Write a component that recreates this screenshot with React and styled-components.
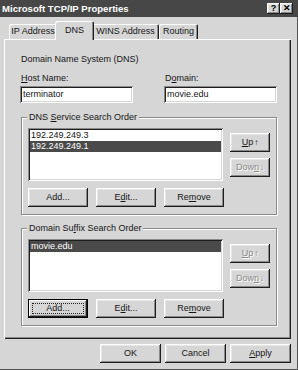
import React from "react"
import styled, { createGlobalStyle, css } from "styled-components"

const GlobalStyle = createGlobalStyle`
  html, body {
    margin: 0;
    padding: 0;
    background: #d6d6d6;
  }
  body {
    font-family: "Liberation Sans", Arial, sans-serif;
    font-size: 9px;
    line-height: 11px;
    color: #151515;
  }
  * {
    box-sizing: border-box;
  }
`

const raised = css`
  background: #d6d6d6;
  box-shadow: inset -1px -1px #1e1e1e, inset 1px 1px #fff,
    inset -2px -2px #8a8a8a, inset 2px 2px #e6e6e6;
`

const sunken = css`
  background: #fff;
  box-shadow: inset 1px 1px #8a8a8a, inset -1px -1px #fff,
    inset 2px 2px #1e1e1e, inset -2px -2px #d6d6d6;
`

const Window = styled.div`
  width: 298px;
  height: 370px;
  background: #d6d6d6;
  display: flex;
  flex-direction: column;
  box-shadow: inset -1px -1px #555;
`

const TitleBar = styled.div`
  height: 17px;
  background: #474747;
  color: #fff;
  display: flex;
  align-items: center;
  padding: 0 5px 0 2px;
  font-weight: bold;
  font-size: 9.6px;
`

const Title = styled.span`
  flex: 1;
`

const TitleButton = styled.div`
  ${raised};
  width: 13px;
  height: 11px;
  display: flex;
  align-items: center;
  justify-content: center;
  font-size: 9px;
  font-weight: bold;
  color: #000;
  margin-left: ${p => (p.$gap ? "0" : "0")};
`

const Body = styled.div`
  display: flex;
  flex-direction: column;
  padding: 4px 7px 0 4px;
`

const TabsRow = styled.div`
  display: flex;
  align-items: flex-end;
  height: 18px;
  padding-left: 5px;
  position: relative;
  z-index: 1;
`

const Tab = styled.div`
  width: ${p => p.$w}px;
  height: 15px;
  border-radius: 2px 2px 0 0;
  background: #d6d6d6;
  box-shadow: inset 1px 1px #fff, inset -1px 0 #1e1e1e, inset -2px 0 #8a8a8a;
  display: flex;
  justify-content: center;
  padding-top: 2px;
  ${p =>
    p.$active &&
    css`
      height: 19px;
      width: ${p.$w + 4}px;
      margin: 0 -2px -1px;
      padding-top: 4px;
      position: relative;
      z-index: 2;
    `}
`

const Panel = styled.div`
  height: 300px;
  display: flex;
  flex-direction: column;
  padding-left: 16px;
  box-shadow: inset 1px 1px #fff, inset -1px -1px #1e1e1e,
    inset -2px -2px #8a8a8a;
`

const Heading = styled.div`
  margin: 15px 0 0 1px;
`

const FieldRow = styled.div`
  display: flex;
  gap: 31px;
  margin-top: 8px;
`

const Field = styled.div`
  width: 113px;
  display: flex;
  flex-direction: column;
`

const FieldLabel = styled.div`
  margin: 0 0 2px 1px;
`

const TextBox = styled.div`
  ${sunken};
  height: 17px;
  padding: 3px 0 0 3px;
`

const Group = styled.div`
  position: relative;
  width: 256px;
  margin: ${p => p.$top}px 0 0 1px;
  padding: 10px 0 7px 6px;
  border: 1px solid #8a8a8a;
  box-shadow: inset 1px 1px #fff, 1px 1px #fff;
`

const Legend = styled.span`
  position: absolute;
  top: -6px;
  left: 5px;
  padding: 0 2px;
  background: #d6d6d6;
`

const ListRow = styled.div`
  display: flex;
  gap: 7px;
`

const ListBox = styled.div`
  ${sunken};
  width: 195px;
  height: 53px;
  padding: 2px 2px;
`

const Item = styled.div`
  height: 11px;
  padding-left: 1px;
  ${p =>
    p.$selected &&
    css`
      background: #4a4a4a;
      color: #fff;
    `}
`

const SideButtons = styled.div`
  display: flex;
  flex-direction: column;
  gap: 6px;
  padding-top: 5px;
`

const ButtonRow = styled.div`
  display: flex;
  gap: 8px;
  margin-top: 7px;
`

const Button = styled.div`
  ${raised};
  position: relative;
  width: ${p => p.$w || 60}px;
  height: 19px;
  display: flex;
  align-items: center;
  justify-content: center;
  padding-bottom: 1px;
  color: ${p => (p.$disabled ? "#8a8a8a" : "#151515")};
  text-shadow: ${p => (p.$disabled ? "1px 1px #fff" : "none")};
  ${p =>
    p.$focused &&
    css`
      box-shadow: inset 0 0 0 1px #000, inset -2px -2px #1e1e1e,
        inset 2px 2px #fff, inset -3px -3px #8a8a8a;
      &::after {
        content: "";
        position: absolute;
        inset: 4px;
        border: 1px dotted #222;
      }
    `}
`

const Arrow = styled.span`
  font-size: 8px;
  margin-left: 1px;
`

const Footer = styled.div`
  display: flex;
  justify-content: flex-end;
  gap: 4px;
  margin-top: 5px;
`

const Key = styled.u`
  text-decoration: underline;
  text-underline-offset: 1px;
`

const SearchGroup = ({ top, title, items, addFocused }) => (
  <Group $top={top}>
    <Legend>{title}</Legend>
    <ListRow>
      <ListBox>
        {items.map(it => (
          <Item key={it.text} $selected={it.selected}>
            {it.text}
          </Item>
        ))}
      </ListBox>
      <SideButtons>
        <Button $w={40} $disabled={addFocused}>
          <Key>U</Key>p<Arrow>↑</Arrow>
        </Button>
        <Button $w={40} $disabled>
          Dow<Key>n</Key>
          <Arrow>↓</Arrow>
        </Button>
      </SideButtons>
    </ListRow>
    <ButtonRow>
      <Button $focused={addFocused}>Add...</Button>
      <Button>
        E<Key>d</Key>it...
      </Button>
      <Button>
        Re<Key>m</Key>ove
      </Button>
    </ButtonRow>
  </Group>
)

export default function App() {
  return (
    <>
      <GlobalStyle />
      <Window>
        <TitleBar>
          <Title>Microsoft TCP/IP Properties</Title>
          <TitleButton>?</TitleButton>
          <TitleButton>✕</TitleButton>
        </TitleBar>
        <Body>
          <TabsRow>
            <Tab $w={48}>IP Address</Tab>
            <Tab $w={35} $active>
              DNS
            </Tab>
            <Tab $w={67}>WINS Address</Tab>
            <Tab $w={39}>Routing</Tab>
          </TabsRow>
          <Panel>
            <Heading>Domain Name System (DNS)</Heading>
            <FieldRow>
              <Field>
                <FieldLabel>
                  <Key>H</Key>ost Name:
                </FieldLabel>
                <TextBox>terminator</TextBox>
              </Field>
              <Field>
                <FieldLabel>
                  D<Key>o</Key>main:
                </FieldLabel>
                <TextBox>movie.edu</TextBox>
              </Field>
            </FieldRow>
            <SearchGroup
              top={14}
              title={
                <>
                  DNS <Key>S</Key>ervice Search Order
                </>
              }
              items={[
                { text: "192.249.249.3" },
                { text: "192.249.249.1", selected: true },
              ]}
            />
            <SearchGroup
              top={13}
              addFocused
              title={
                <>
                  Domain Su<Key>f</Key>fix Search Order
                </>
              }
              items={[{ text: "movie.edu", selected: true }]}
            />
          </Panel>
          <Footer>
            <Button $w={61}>OK</Button>
            <Button $w={61}>Cancel</Button>
            <Button $w={61}>
              <Key>A</Key>pply
            </Button>
          </Footer>
        </Body>
      </Window>
    </>
  )
}
